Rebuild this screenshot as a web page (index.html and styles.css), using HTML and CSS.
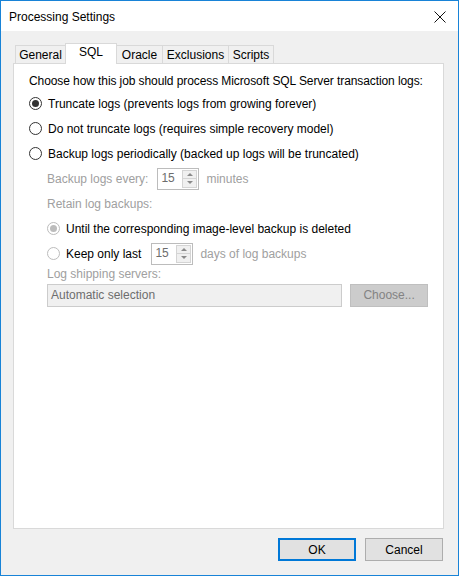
FILE: index.html
```html
<!DOCTYPE html>
<html lang="en">

    <head>
        <meta charset="UTF-8">
        <meta name="viewport" content="width=device-width, initial-scale=1.0">
        <title>Processing Settings</title>
        <link rel="stylesheet" href="styles.css">
    </head>

    <body>
        <div class="window">
            <div class="titlebar">
                <span class="title">Processing Settings</span>
                <svg class="close" width="12" height="12" viewBox="0 0 12 12">
                    <path d="M0.5 0.5 L11.5 11.5 M11.5 0.5 L0.5 11.5" stroke="#111" stroke-width="1" fill="none"/>
                </svg>
            </div>

            <div class="client">
                <div class="tabs">
                    <div class="tab tab-general">General</div>
                    <div class="tab tab-sql active">SQL</div>
                    <div class="tab tab-oracle">Oracle</div>
                    <div class="tab tab-exclusions">Exclusions</div>
                    <div class="tab tab-scripts">Scripts</div>
                </div>

                <div class="panel">
                    <div class="intro">Choose how this job should process Microsoft SQL Server transaction logs:</div>

                    <div class="row">
                        <span class="radio checked"></span>
                        <span>Truncate logs (prevents logs from growing forever)</span>
                    </div>
                    <div class="row">
                        <span class="radio"></span>
                        <span>Do not truncate logs (requires simple recovery model)</span>
                    </div>
                    <div class="row">
                        <span class="radio"></span>
                        <span>Backup logs periodically (backed up logs will be truncated)</span>
                    </div>

                    <div class="row indent muted">
                        <span class="label-every">Backup logs every:</span>
                        <span class="spinner">
                            <span class="spin-value">15</span>
                            <span class="spin-buttons">
                                <span class="spin-btn"><span class="arrow-up"></span></span>
                                <span class="spin-btn"><span class="arrow-down"></span></span>
                            </span>
                        </span>
                        <span class="after-spin">minutes</span>
                    </div>

                    <div class="row indent muted">Retain log backups:</div>

                    <div class="row indent">
                        <span class="radio checked disabled"></span>
                        <span>Until the corresponding image-level backup is deleted</span>
                    </div>
                    <div class="row indent">
                        <span class="radio disabled"></span>
                        <span class="label-keep">Keep only last</span>
                        <span class="spinner">
                            <span class="spin-value">15</span>
                            <span class="spin-buttons">
                                <span class="spin-btn"><span class="arrow-up"></span></span>
                                <span class="spin-btn"><span class="arrow-down"></span></span>
                            </span>
                        </span>
                        <span class="after-spin muted">days of log backups</span>
                    </div>

                    <div class="indent muted shipping-label">Log shipping servers:</div>
                    <div class="indent shipping">
                        <div class="textbox">Automatic selection</div>
                        <div class="btn-choose">Choose...</div>
                    </div>
                </div>

                <div class="buttons">
                    <button type="button" class="btn btn-default">OK</button>
                    <button type="button" class="btn">Cancel</button>
                </div>
            </div>
        </div>
    </body>

</html>
```

FILE: styles.css
```css
body {
    margin: 0;
    font-family: "Liberation Sans", Arial, sans-serif;
    font-size: 12px;
    color: #000;
}

.window {
    width: 459px;
    height: 576px;
    box-sizing: border-box;
    border: 1px solid #1883d7;
    display: flex;
    flex-direction: column;
    background: #f0f0f0;
}

.titlebar {
    height: 30px;
    background: #fff;
    display: flex;
    align-items: center;
    justify-content: space-between;
    padding: 0 12px 0 8px;
}

.title {
    font-size: 12px;
    padding-top: 1px;
}

.close {
    display: block;
    margin-top: 1px;
}

.client {
    flex: 1;
    display: flex;
    flex-direction: column;
    padding: 12px 14px 14px 12px;
}

/* tabs */
.tabs {
    display: flex;
    align-items: flex-end;
    height: 20px;
    padding-left: 2px;
}

.tab {
    box-sizing: border-box;
    height: 18px;
    border: 1px solid #d9d9d9;
    border-bottom: none;
    margin-right: -1px;
    text-align: center;
    line-height: 18px;
    background: #f0f0f0;
}

.tab.active {
    height: 21px;
    margin-bottom: -1px;
    background: #fff;
    line-height: 16px;
    position: relative;
    z-index: 1;
}

.tab-general { width: 51px; }
.tab-sql { width: 52px; }
.tab-oracle { width: 47px; }
.tab-exclusions { width: 67px; }
.tab-scripts { width: 46px; }

/* panel */
.panel {
    flex: 1;
    background: #fff;
    border: 1px solid #d9d9d9;
    padding: 8px 15px 0 15px;
}

.intro {
    height: 19px;
    line-height: 18px;
    white-space: nowrap;
    letter-spacing: -0.09px;
}

.row {
    height: 25px;
    display: flex;
    align-items: center;
    white-space: nowrap;
}

.indent {
    margin-left: 18px;
}

.muted {
    color: #a0a0a0;
}

.radio {
    box-sizing: border-box;
    width: 13px;
    height: 13px;
    border: 1px solid #333;
    border-radius: 50%;
    background: #fff;
    margin-right: 6px;
    display: flex;
    align-items: center;
    justify-content: center;
}

.radio.checked::after {
    content: "";
    width: 7px;
    height: 7px;
    border-radius: 50%;
    background: #333;
}

.radio.disabled {
    border-color: #bcbcbc;
}

.radio.disabled.checked::after {
    background: #bcbcbc;
}

/* spinners */
.spinner {
    box-sizing: border-box;
    width: 42px;
    height: 22px;
    border: 1px solid #bcbcbc;
    display: flex;
    align-items: stretch;
    background: #fff;
}

.spin-value {
    flex: 1;
    padding-left: 3px;
    line-height: 19px;
    color: #6d6d6d;
}

.spin-buttons {
    width: 15px;
    display: flex;
    flex-direction: column;
    padding: 1px 1px 1px 0;
}

.spin-btn {
    flex: 1;
    border: 1px solid #d4d4d4;
    background: #f0f0f0;
    display: flex;
    align-items: center;
    justify-content: center;
}

.spin-btn + .spin-btn {
    border-top: none;
}

.arrow-up {
    width: 0;
    height: 0;
    border-left: 3px solid transparent;
    border-right: 3px solid transparent;
    border-bottom: 3px solid #8a8a8a;
}

.arrow-down {
    width: 0;
    height: 0;
    border-left: 3px solid transparent;
    border-right: 3px solid transparent;
    border-top: 3px solid #8a8a8a;
}

.label-every {
    margin-right: 9px;
}

.label-keep {
    margin-right: 10px;
}

.after-spin {
    margin-left: 7px;
}

/* log shipping */
.shipping-label {
    height: 16px;
    line-height: 16px;
    margin-bottom: 2px;
}

.shipping {
    display: flex;
    gap: 8px;
}

.textbox {
    box-sizing: border-box;
    width: 296px;
    height: 23px;
    border: 1px solid #cccccc;
    background: #f0f0f0;
    color: #6d6d6d;
    line-height: 21px;
    padding-left: 3px;
}

.btn-choose {
    box-sizing: border-box;
    width: 78px;
    height: 23px;
    border: 1px solid #bfbfbf;
    background: #cccccc;
    color: #838383;
    text-align: center;
    line-height: 21px;
}

/* bottom buttons */
.buttons {
    display: flex;
    justify-content: flex-end;
    gap: 9px;
    margin-top: 9px;
    padding-right: 1px;
}

.btn {
    box-sizing: border-box;
    width: 78px;
    height: 23px;
    border: 1px solid #adadad;
    background: #e1e1e1;
    font-family: inherit;
    font-size: 12px;
    padding: 0;
    color: #000;
}

.btn-default {
    border: 2px solid #0078d7;
}
```
